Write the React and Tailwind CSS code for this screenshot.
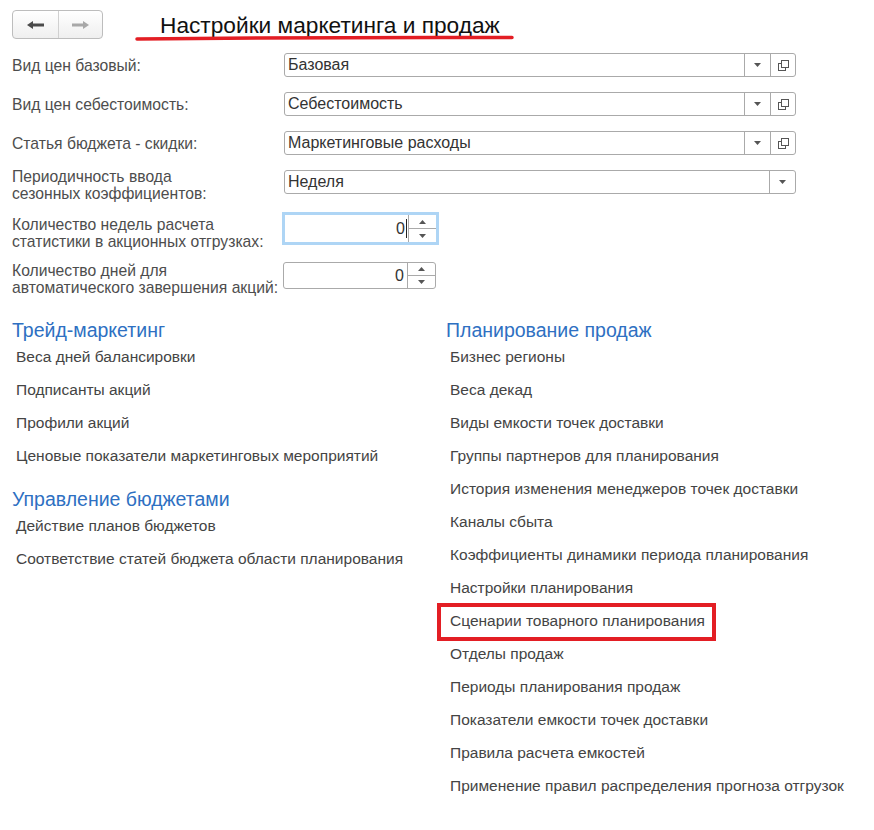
import React from "react";

const Tri = ({ up = false, color = "#555" }) => (
  <svg width="7" height="4" viewBox="0 0 7 4" className="block">
    {up ? <path d="M0 4h7L3.5 0z" fill={color} /> : <path d="M0 0h7L3.5 4z" fill={color} />}
  </svg>
);

const CopyIcon = () => (
  <svg width="13" height="13" viewBox="0 0 13 13" className="block">
    <rect x="1.5" y="4.5" width="7" height="7" fill="none" stroke="#555" strokeWidth="1" />
    <rect x="4.5" y="1.5" width="7" height="7" fill="#fff" stroke="#555" strokeWidth="1" />
  </svg>
);

function Field({ value, copy = true }) {
  return (
    <div className="flex h-[24px] w-[512px] rounded-[3px] border border-[#aaaaaa] bg-white">
      <div className="flex flex-1 items-center pl-[3px] text-[16px] text-[#333333]">{value}</div>
      <div className="flex w-[26px] items-center justify-center border-l border-[#aaaaaa]">
        <Tri />
      </div>
      {copy && (
        <div className="flex w-[25px] items-center justify-center border-l border-[#aaaaaa]">
          <CopyIcon />
        </div>
      )}
    </div>
  );
}

function Spin() {
  return (
    <div className="flex w-[28px] flex-col border-l border-[#aaaaaa]">
      <div className="flex flex-1 items-center justify-center border-b border-[#aaaaaa]">
        <Tri up />
      </div>
      <div className="flex flex-1 items-center justify-center">
        <Tri />
      </div>
    </div>
  );
}

function Label({ children, className = "" }) {
  return (
    <div className={"w-[271px] shrink-0 whitespace-nowrap text-[15.7px] leading-[17px] text-[#4d4d4d] " + className}>
      {children}
    </div>
  );
}

function Item({ children, highlight = false }) {
  return (
    <div className="relative h-[33px] pl-[4px] text-[15.5px] leading-[33px] text-[#444444] whitespace-nowrap">
      {children}
      {highlight && (
        <span className="pointer-events-none absolute left-[-9px] top-[-1px] h-[38px] w-[279px] border-[4px] border-[#e31e24]" />
      )}
    </div>
  );
}

function Heading({ children, className = "" }) {
  return (
    <div className={"h-[19px] text-[19.5px] leading-[19px] text-[#2e70c2] whitespace-nowrap " + className}>
      {children}
    </div>
  );
}

export default function App() {
  const right = [
    "Бизнес регионы",
    "Веса декад",
    "Виды емкости точек доставки",
    "Группы партнеров для планирования",
    "История изменения менеджеров точек доставки",
    "Каналы сбыта",
    "Коэффициенты динамики периода планирования",
    "Настройки планирования",
    "Сценарии товарного планирования",
    "Отделы продаж",
    "Периоды планирования продаж",
    "Показатели емкости точек доставки",
    "Правила расчета емкостей",
    "Применение правил распределения прогноза отгрузок",
  ];
  return (
    <div className="relative h-[830px] w-[874px] overflow-hidden bg-white font-['Liberation_Sans',Arial,sans-serif]">
      {/* header */}
      <div className="relative flex h-[39px] items-end pl-[12px]">
        <div className="flex h-[29px] w-[91px] rounded-[4px] border border-[#bdbdbd] bg-gradient-to-b from-white to-[#efefef]">
          <div className="flex w-[46px] items-center justify-center border-r border-[#d0d0d0]">
            <svg width="17" height="8" viewBox="0 0 17 8">
              <path d="M0 4L6 0v2.5h11v3H6V8z" fill="#4a4a4a" />
            </svg>
          </div>
          <div className="flex flex-1 items-center justify-center">
            <svg width="17" height="8" viewBox="0 0 17 8">
              <path d="M17 4L11 0v2.5H0v3h11V8z" fill="#a8a8a8" />
            </svg>
          </div>
        </div>
        <div className="ml-[57px] self-center pt-[10px] text-[22.7px] leading-[26px] text-[#111111] whitespace-nowrap">
          Настройки маркетинга и продаж
        </div>
        <svg className="absolute left-[135px] top-[34px]" width="380" height="8" viewBox="0 0 380 8">
          <path d="M2 5 Q 190 3 377 3.5" stroke="#e31e24" strokeWidth="3.5" fill="none" strokeLinecap="round" />
        </svg>
      </div>

      {/* form */}
      <div className="mt-[14px] pl-[12px]">
        <div className="flex h-[24px] items-center">
          <Label>Вид цен базовый:</Label>
          <div className="ml-[1px]"><Field value="Базовая" /></div>
        </div>
        <div className="mt-[15px] flex h-[24px] items-center">
          <Label>Вид цен себестоимость:</Label>
          <div className="ml-[1px]"><Field value="Себестоимость" /></div>
        </div>
        <div className="mt-[15px] flex h-[24px] items-center">
          <Label>Статья бюджета - скидки:</Label>
          <div className="ml-[1px]"><Field value="Маркетинговые расходы" /></div>
        </div>
        <div className="mt-[15px] flex h-[24px] items-start">
          <Label className="mt-[-2px]">
            Периодичность ввода
            <br />
            сезонных коэффициентов:
          </Label>
          <div className="ml-[1px]"><Field value="Неделя" copy={false} /></div>
        </div>
        <div className="mt-[18px] flex h-[33px] items-start">
          <Label className="mt-[4px]">
            Количество недель расчета
            <br />
            статистики в акционных отгрузках:
          </Label>
          <div className="ml-[-1px] flex h-[33px] w-[157px] border-[3px] border-[#aed5f5] bg-white">
            <div className="flex flex-1 items-center justify-end pr-[1px] text-[16px] text-[#333333]">
              0<span className="ml-[1px] inline-block h-[19px] w-[1px] bg-[#222222]" />
            </div>
            <Spin />
          </div>
        </div>
        <div className="mt-[17px] flex h-[27px] items-start">
          <Label className="mt-[0px]">
            Количество дней для
            <br />
            автоматического завершения акций:
          </Label>
          <div className="ml-[0px] flex h-[27px] w-[153px] rounded-[3px] border border-[#aaaaaa] bg-white">
            <div className="flex flex-1 items-center justify-end pr-[3px] text-[16px] text-[#333333]">0</div>
            <Spin />
          </div>
        </div>
      </div>

      {/* sections */}
      <div className="mt-[32px] grid grid-cols-[434px_1fr] pl-[12px]">
        <div>
          <Heading>Трейд-маркетинг</Heading>
          <Item>Веса дней балансировки</Item>
          <Item>Подписанты акций</Item>
          <Item>Профили акций</Item>
          <Item>Ценовые показатели маркетинговых мероприятий</Item>
          <Heading className="mt-[18px]">Управление бюджетами</Heading>
          <Item>Действие планов бюджетов</Item>
          <Item>Соответствие статей бюджета области планирования</Item>
        </div>
        <div>
          <Heading>Планирование продаж</Heading>
          {right.map((t) => (
            <Item key={t} highlight={t === "Сценарии товарного планирования"}>
              {t}
            </Item>
          ))}
        </div>
      </div>
    </div>
  );
}
